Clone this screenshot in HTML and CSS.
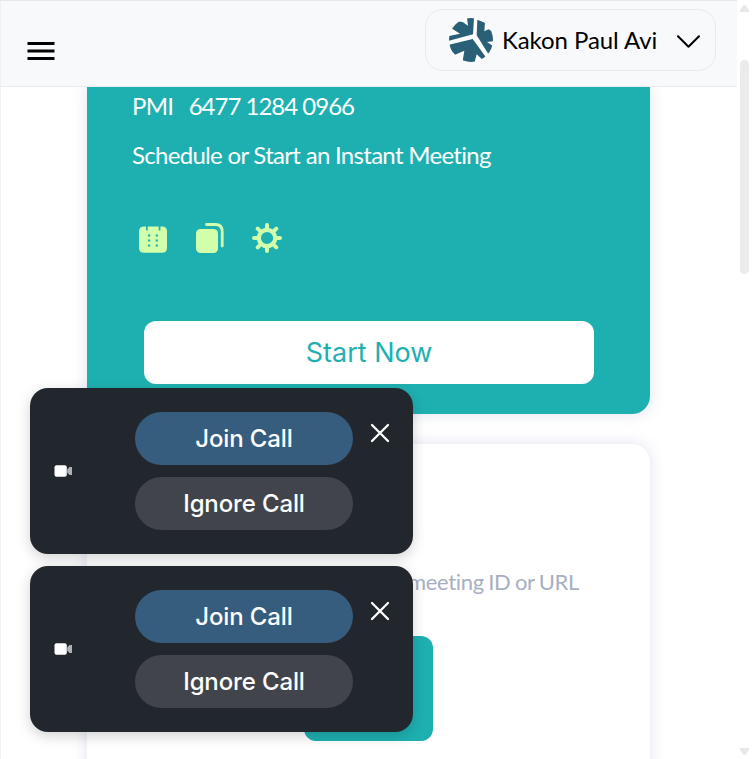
FILE: index.html
```html
<!DOCTYPE html>
<html lang="en">
<head>
<meta charset="utf-8">
<title>Meetings</title>
<link rel="stylesheet" href="styles.css">
</head>
<body>
<div class="page">
  <div class="app">
    <header class="topbar">
      <button class="menu" aria-label="Menu">
        <svg width="28" height="18" viewBox="0 0 28 18"><path d="M.5 1.5h27M.5 9h27M.5 16.5h27" stroke="#000" stroke-width="3"/></svg>
      </button>
      <div class="user">
        <svg class="avatar" viewBox="27 24 132 132">
          <defs><clipPath id="round"><circle cx="93" cy="90" r="66"/></clipPath></defs>
          <g clip-path="url(#round)">
            <path fill="#fff" d="M27 24h132v132H27z"/>
            <g fill="#2a5f78">
              <path d="M81 24h21l-3 49-72 19V78l33-7-27-17 15-21 20 3 16 11z"/>
              <path d="M112 29l23 9-2 26 12-6 20 9v26l-24 3 21 14-15 25-37-59z"/>
              <path d="M27 104l71-17 41 56-8 9-21-19-7 27-35-7 5-31-28 12-12-12z"/>
            </g>
          </g>
        </svg>
        <span class="user-name">Kakon Paul Avi</span>
        <svg class="chevron" width="23" height="13" viewBox="0 0 23 13"><path d="M1 1.200 11.500 11.700 22 1.200" fill="none" stroke="#000" stroke-width="2" stroke-linecap="round" stroke-linejoin="round"/></svg>
      </div>
    </header>
    <main class="content">
      <section class="card instant">
        <div class="pmi"><span>PMI</span><span class="digits">6477 1284 0966</span></div>
        <div class="lead">Schedule or Start an Instant Meeting</div>
        <div class="tools">
          <svg width="28" height="27" viewBox="0 0 28 27"><path fill="#d2ffaa" d="M5 .5h2v4h1.700v-4h11v4h1.700v-4H23q5 0 5 5V22q0 4.800-4.800 4.800H4.800Q0 26.800 0 22V5.500q0-5 5-5z"/><path fill="#1eb0b1" d="M9 8.500h2.200v2H9zM16.700 8.500h2.200v2h-2.200zM9 13.500h2.200v2H9zM16.700 13.500h2.200v2h-2.200zM9 18.500h2.200v2H9zM16.700 18.500h2.200v2h-2.200z"/></svg>
          <svg width="29" height="30" viewBox="0 0 29 30"><rect x="1" y="6" width="22" height="24" rx="4.500" fill="#d2ffaa"/><path d="M11.500 1.500H20.500q6.700 0 6.700 7V23" fill="none" stroke="#d2ffaa" stroke-width="2.800" stroke-linecap="round"/></svg>
          <svg width="30" height="30" viewBox="0 0 30 30"><g stroke="#d2ffaa" fill="none"><circle cx="15" cy="15" r="8.200" stroke-width="4.200"/><path d="M15 2v4M15 24v4M2 15h4M24 15h4M5.700 5.700l2.500 2.500M21.800 21.800l2.500 2.500M24.300 5.700l-2.500 2.500M8.200 21.800l-2.500 2.500" stroke-width="4" stroke-linecap="round"/></g></svg>
        </div>
        <button class="start">Start Now</button>
      </section>
      <section class="card join">
        <div class="field">Enter meeting ID or URL</div>
        <div class="join-button"></div>
      </section>
    </main>
  </div>
  <div class="scrollbar">
    <svg width="9" height="7" viewBox="0 0 9 7"><path d="M4.500 0q1 0 1.500.8L9 5.500V7H0V5.500L3 .8Q3.500 0 4.500 0z" fill="#e8e8e8"/></svg>
    <div class="thumb"></div>
    <svg class="down" width="9" height="7" viewBox="0 0 9 7"><path d="M4.500 7q1 0 1.500-.8L9 1.500V0H0v1.500l3 4.700q.5.800 1.500.8z" fill="#e8e8e8"/></svg>
  </div>
</div>
<aside class="toasts">
  <div class="toast">
    <svg class="camera" width="18" height="12" viewBox="0 0 18 12"><rect x=".5" y=".3" width="12.300" height="11.400" rx="2" fill="#fff"/><path d="M13.200 4.500 15.500 2H18v8h-2.500l-2.300-2.500z" fill="#b0b3b6"/></svg>
    <div class="actions"><button class="pill accept">Join Call</button><button class="pill">Ignore Call</button></div>
    <svg class="close" width="20" height="20" viewBox="0 0 20 20"><path d="m2 2 16 16M18 2 2 18" stroke="#fff" stroke-width="2.300" stroke-linecap="round"/></svg>
  </div>
  <div class="toast">
    <svg class="camera" width="18" height="12" viewBox="0 0 18 12"><rect x=".5" y=".3" width="12.300" height="11.400" rx="2" fill="#fff"/><path d="M13.200 4.500 15.500 2H18v8h-2.500l-2.300-2.500z" fill="#b0b3b6"/></svg>
    <div class="actions"><button class="pill accept">Join Call</button><button class="pill">Ignore Call</button></div>
    <svg class="close" width="20" height="20" viewBox="0 0 20 20"><path d="m2 2 16 16M18 2 2 18" stroke="#fff" stroke-width="2.300" stroke-linecap="round"/></svg>
  </div>
</aside>
</body>
</html>
```
FILE: styles.css
```css
* { box-sizing: border-box; }
body { margin: 0; overflow: hidden; background: #fff; font-family: Lato, sans-serif; }
button { border: 0; padding: 0; background: none; font: inherit; }
svg { display: block; flex: none; }
.page { display: flex; height: 759px; overflow: hidden; }
.app { width: 737px; border-left: 1px solid #edf0f5; border-top: 1px solid #e6e8ea; overflow: hidden; }
.topbar { position: relative; z-index: 1; display: flex; justify-content: space-between; height: 86px; padding: 8px 21px 0 26px; background: #f8f9fb; border-bottom: 1px solid #e8eaeb; }
.menu { height: 18px; margin-top: 33px; }
.user { display: flex; align-items: center; width: 291px; height: 62px; padding: 0 15px 0 23px; border: 1px solid #e8eaec; border-radius: 18px; }
.avatar { width: 44px; height: 44px; }
.user-name { margin-left: 9px; font-size: 24px; line-height: 30px; letter-spacing: -.07px; white-space: nowrap; color: #000; }
.chevron { margin: 3px 0 0 auto; }
.content { display: flex; flex-direction: column; gap: 30px; padding-left: 86px; }
.card { width: 563px; box-shadow: 0 0 15px rgba(75, 95, 160, .18); }
.instant { height: 327px; padding: 3px 45px 0; border-radius: 0 0 18px 18px; background: #1eb0b1; color: #fff; font-size: 24px; line-height: 32px; }
.pmi { display: flex; gap: 15.5px; letter-spacing: -.75px; }
.digits { letter-spacing: -1px; }
.lead { margin-top: 17px; letter-spacing: -.7px; white-space: nowrap; }
.tools { display: flex; gap: 28px; align-items: flex-end; height: 30px; margin: 52px 0 0 7px; }
.start { display: block; width: 450px; height: 63px; margin: 68px 0 0 12px; border-radius: 12px; background: #fff; color: #1eb0b1; font: 27px/63px Inter, sans-serif; }
.join { height: 400px; padding: 122px 71px 0; border-radius: 18px; background: #fff; }
.field { font-size: 22px; line-height: 32px; letter-spacing: -.3px; word-spacing: -1px; text-align: right; color: #a7afc2; }
.join-button { width: 129px; height: 105px; margin: 38px auto 0; border-radius: 12px; background: #1eb0b1; }
.scrollbar { display: flex; flex-direction: column; width: 15px; padding: 5px 3px 4px; }
.thumb { width: 9px; height: 214px; margin-top: 48px; border-radius: 5px; background: #ebebeb; }
.down { margin-top: auto; }
.toasts { position: absolute; z-index: 2; left: 30px; top: 388px; display: flex; flex-direction: column; gap: 12px; }
.toast { display: flex; width: 383px; height: 166px; padding: 24px 23px 24px 24px; border-radius: 18px; background: #22272e; box-shadow: 0 4px 14px rgba(0, 0, 0, .18); }
.camera { align-self: center; }
.actions { display: flex; flex-direction: column; gap: 12px; width: 218px; margin-left: 63px; }
.pill { height: 53px; border-radius: 27px; background: #41454b; color: #fff; font: 500 24px/53px Inter, sans-serif; letter-spacing: -.13px; }
.accept { background: #365d7e; }
.close { margin: 11px 0 0 auto; }
```
